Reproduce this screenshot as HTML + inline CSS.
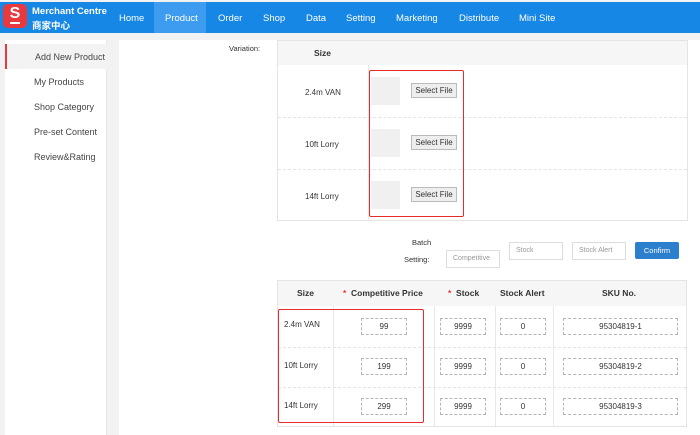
<!DOCTYPE html>
<html><head><meta charset="utf-8"><style>
*{box-sizing:border-box;margin:0;padding:0}
body{width:700px;height:435px;overflow:hidden;background:#f2f2f2;font-family:"Liberation Sans","Noto Sans CJK SC",sans-serif;color:#333;position:relative}
.a{position:absolute}
.nav{left:0;top:2px;width:700px;height:31px;background:#1787e6}
.nav span{position:absolute;top:11px;color:#fff;font-size:9.5px}
.logo{left:3px;top:4px;width:24px;height:24px;background:#e8393e;border-radius:5px;color:#fff;font-weight:bold;font-size:16px;text-align:center;line-height:20px}
.side{left:5px;top:40px;width:102px;height:395px;background:#fff;border-right:1px solid #e6e6e6}
.side div{position:absolute;left:29px;font-size:9px;color:#444}
.main{left:119px;top:40px;width:581px;height:395px;background:#fff}
.t{border:1px solid #e4e4e4;background:#fff}
.hd{background:#f6f6f6}
.dash{border-top:1px dashed #e4e4e4}
.inp{position:absolute;border:1px dashed #b5b5b5;height:17px;font-size:8px;text-align:center;line-height:15px;color:#333}
.binp{position:absolute;border:1px solid #ddd;height:18px;font-size:7px;color:#999;padding-left:6px;line-height:16px;background:#fff}
.sf{position:absolute;left:411px;width:46px;height:15px;border:1px solid #bbb;background:#eee;font-size:8px;text-align:center;line-height:13px;color:#333}
.th{position:absolute;width:29px;left:371px;height:28px;background:#f0f0f0}
.c{position:absolute;font-size:8px;color:#333}
.b{font-weight:bold;font-size:8.5px}
.red{position:absolute;border:1.5px solid #e52b2b;border-radius:2px}
.vl{position:absolute;border-left:1px solid #e8e8e8}
</style></head><body>
<div class="a nav">
<span style="left:32px;top:4px;font-weight:bold;font-size:9.5px">Merchant Centre</span>
<span style="left:32px;top:16px;font-weight:bold;font-size:9.5px">商家中心</span>
<div class="a" style="left:154px;top:0;width:52px;height:31px;background:#3d9cef"></div>
<span style="left:119px">Home</span><span style="left:165px">Product</span><span style="left:218px">Order</span><span style="left:263px">Shop</span><span style="left:306px">Data</span><span style="left:346px">Setting</span><span style="left:396px">Marketing</span><span style="left:459px">Distribute</span><span style="left:519px">Mini Site</span>
</div>
<div class="a logo">S</div>
<div class="a" style="left:10px;top:22px;width:10px;height:2px;background:#fff"></div>
<div class="a side">
<div style="left:0;top:4px;width:102px;height:25px;background:#f3f3f3;border-left:2px solid #e8393e"></div>
<div style="left:30px;top:12px">Add New Product</div>
<div style="top:37px">My Products</div>
<div style="top:62px">Shop Category</div>
<div style="top:87px">Pre-set Content</div>
<div style="top:112px">Review&amp;Rating</div>
</div>
<div class="a main"></div>
<div class="c" style="left:229px;top:44px;font-size:7.5px">Variation:</div>
<div class="a t" style="left:277px;top:40px;width:411px;height:181px"></div>
<div class="a hd" style="left:278px;top:41px;width:409px;height:24px"></div>
<div class="c b" style="left:314px;top:48px">Size</div>
<div class="vl" style="left:368px;top:65px;height:156px"></div>
<div class="a dash" style="left:278px;top:117px;width:409px"></div>
<div class="a dash" style="left:278px;top:169px;width:409px"></div>
<div class="c" style="left:305px;top:88px">2.4m VAN</div>
<div class="c" style="left:305px;top:140px">10ft Lorry</div>
<div class="c" style="left:305px;top:192px">14ft Lorry</div>
<div class="th" style="top:77px"></div><div class="th" style="top:129px"></div><div class="th" style="top:181px"></div>
<div class="sf" style="top:83px">Select File</div><div class="sf" style="top:135px">Select File</div><div class="sf" style="top:187px">Select File</div>
<div class="red" style="left:369px;top:70px;width:95px;height:147px"></div>
<div class="c" style="left:412px;top:238px;font-size:7.5px">Batch</div>
<div class="c" style="left:404px;top:255px;font-size:7.5px">Setting:</div>
<div class="binp" style="left:446px;top:250px;width:54px">Competitive</div>
<div class="binp" style="left:509px;top:242px;width:54px">Stock</div>
<div class="binp" style="left:572px;top:242px;width:54px">Stock Alert</div>
<div class="a" style="left:635px;top:242px;width:44px;height:17px;background:#2c7fcd;border-radius:2px;color:#fff;font-size:7.5px;text-align:center;line-height:17px">Confirm</div>
<div class="a t" style="left:277px;top:280px;width:410px;height:147px"></div>
<div class="a hd" style="left:278px;top:281px;width:408px;height:25px"></div>
<div class="c b" style="left:297px;top:288px">Size</div>
<div class="c b" style="left:343px;top:288px"><span style="color:#e33">*</span>&nbsp; Competitive Price</div>
<div class="c b" style="left:448px;top:288px"><span style="color:#e33">*</span>&nbsp; Stock</div>
<div class="c b" style="left:500px;top:288px">Stock Alert</div>
<div class="c b" style="left:602px;top:288px">SKU No.</div>
<div class="vl" style="left:333px;top:306px;height:121px"></div>
<div class="vl" style="left:434px;top:306px;height:121px"></div>
<div class="vl" style="left:495px;top:306px;height:121px"></div>
<div class="vl" style="left:553px;top:306px;height:121px"></div>
<div class="a dash" style="left:278px;top:347px;width:408px"></div>
<div class="a dash" style="left:278px;top:387px;width:408px"></div>
<div class="c" style="left:284px;top:320px">2.4m VAN</div>
<div class="c" style="left:284px;top:361px">10ft Lorry</div>
<div class="c" style="left:284px;top:401px">14ft Lorry</div>
<div class="inp" style="left:361px;top:318px;width:46px">99</div>
<div class="inp" style="left:361px;top:358px;width:46px">199</div>
<div class="inp" style="left:361px;top:398px;width:46px">299</div>
<div class="inp" style="left:440px;top:318px;width:46px">9999</div>
<div class="inp" style="left:440px;top:358px;width:46px">9999</div>
<div class="inp" style="left:440px;top:398px;width:46px">9999</div>
<div class="inp" style="left:500px;top:318px;width:46px">0</div>
<div class="inp" style="left:500px;top:358px;width:46px">0</div>
<div class="inp" style="left:500px;top:398px;width:46px">0</div>
<div class="inp" style="left:563px;top:318px;width:115px">95304819-1</div>
<div class="inp" style="left:563px;top:358px;width:115px">95304819-2</div>
<div class="inp" style="left:563px;top:398px;width:115px">95304819-3</div>
<div class="red" style="left:278px;top:309px;width:146px;height:114px"></div>
</body></html>
